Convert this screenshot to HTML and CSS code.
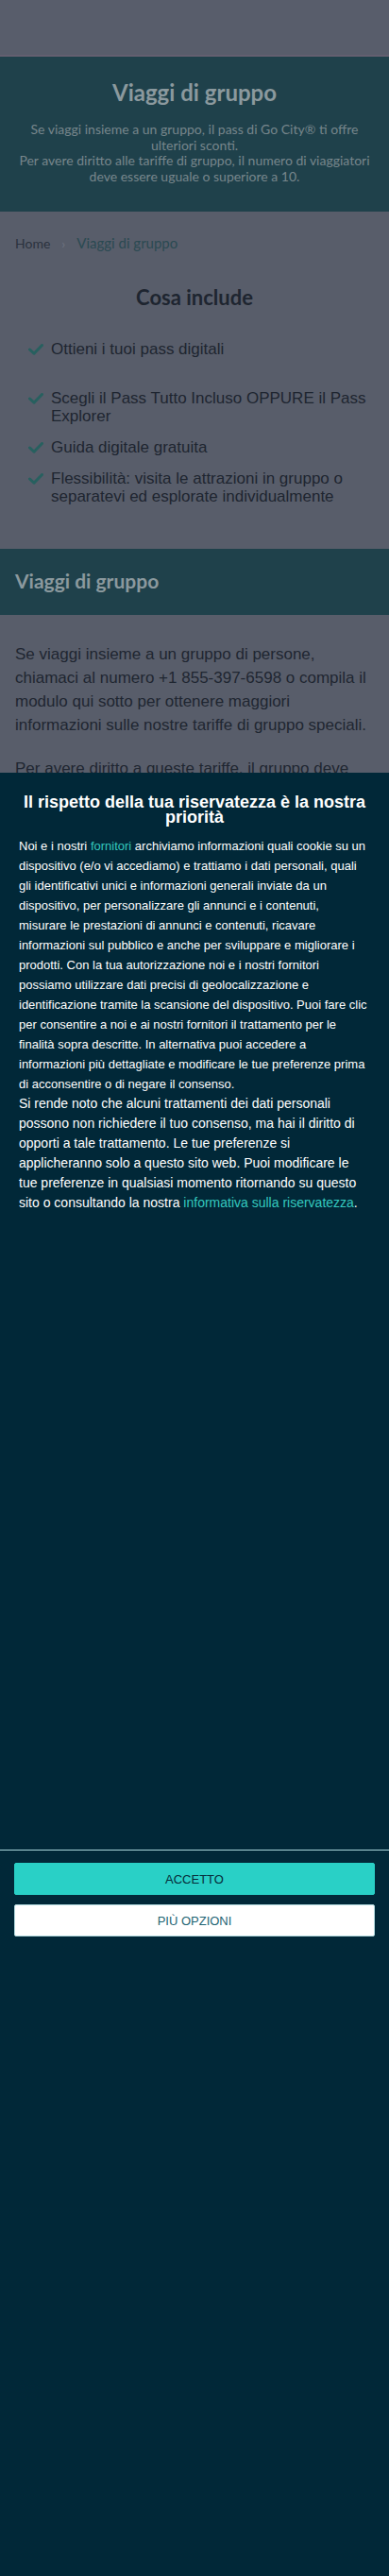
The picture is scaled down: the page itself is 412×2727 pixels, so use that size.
FILE: index.html
```html
<!DOCTYPE html>
<html lang="it">
<head>
<meta charset="utf-8">
<meta name="viewport" content="width=device-width, initial-scale=1">
<title>Viaggi di gruppo | Go City</title>
<link rel="stylesheet" href="styles.css">
</head>
<body>
<header class="site-header"></header>

<section class="hero">
  <h1 class="hero-title">Viaggi di gruppo</h1>
  <p class="hero-sub">Se viaggi insieme a un gruppo, il pass di Go City® ti offre<br>ulteriori sconti.<br>Per avere diritto alle tariffe di gruppo, il numero di viaggiatori<br>deve essere uguale o superiore a 10.</p>
</section>

<nav class="crumbs">
  <span class="crumb">Home</span>
  <span class="crumb-sep">›</span>
  <span class="crumb crumb-current">Viaggi di gruppo</span>
</nav>

<section class="includes">
  <h2 class="includes-title">Cosa include</h2>
  <ul class="checklist">
    <li class="check-item check-item-first"><svg class="check" viewBox="0 0 16 12"><polyline points="1.5,6 6,10.2 14.5,1.5"/></svg><span>Ottieni i tuoi pass digitali</span></li>
    <li class="check-item"><svg class="check" viewBox="0 0 16 12"><polyline points="1.5,6 6,10.2 14.5,1.5"/></svg><span>Scegli il Pass Tutto Incluso OPPURE il Pass Explorer</span></li>
    <li class="check-item"><svg class="check" viewBox="0 0 16 12"><polyline points="1.5,6 6,10.2 14.5,1.5"/></svg><span>Guida digitale gratuita</span></li>
    <li class="check-item"><svg class="check" viewBox="0 0 16 12"><polyline points="1.5,6 6,10.2 14.5,1.5"/></svg><span>Flessibilità: visita le attrazioni in gruppo o separatevi ed esplorate individualmente</span></li>
  </ul>
</section>

<section class="band">
  <h2 class="band-title">Viaggi di gruppo</h2>
</section>

<section class="content">
  <p class="content-text">Se viaggi insieme a un gruppo di persone, chiamaci al numero +1 855-397-6598 o compila il modulo qui sotto per ottenere maggiori informazioni sulle nostre tariffe di gruppo speciali.</p>
  <p class="content-text">Per avere diritto a queste tariffe, il gruppo deve essere composto da almeno 10 persone.</p>
</section>

<div class="cmp-panel" role="dialog" aria-label="Il rispetto della tua riservatezza è la nostra priorità">
  <div class="cmp-body">
    <h2 class="cmp-title">Il rispetto della tua riservatezza è la nostra priorità</h2>
    <div class="cmp-text">Noi e i nostri <a class="cmp-link" href="#">fornitori</a> archiviamo informazioni quali cookie su un<br>dispositivo (e/o vi accediamo) e trattiamo i dati personali, quali<br>gli identificativi unici e informazioni generali inviate da un<br>dispositivo, per personalizzare gli annunci e i contenuti,<br>misurare le prestazioni di annunci e contenuti, ricavare<br>informazioni sul pubblico e anche per sviluppare e migliorare i<br>prodotti. Con la tua autorizzazione noi e i nostri fornitori<br>possiamo utilizzare dati precisi di geolocalizzazione e<br>identificazione tramite la scansione del dispositivo. Puoi fare clic<br>per consentire a noi e ai nostri fornitori il trattamento per le<br>finalità sopra descritte. In alternativa puoi accedere a<br>informazioni più dettagliate e modificare le tue preferenze prima<br>di acconsentire o di negare il consenso.</div>
    <div class="cmp-text cmp-text-large">Si rende noto che alcuni trattamenti dei dati personali<br>possono non richiedere il tuo consenso, ma hai il diritto di<br>opporti a tale trattamento. Le tue preferenze si<br>applicheranno solo a questo sito web. Puoi modificare le<br>tue preferenze in qualsiasi momento ritornando su questo<br>sito o consultando la nostra <a class="cmp-link" href="#">informativa sulla riservatezza</a>.</div>
  </div>
  <div class="cmp-footer">
    <button class="cmp-btn cmp-btn-accept" type="button">ACCETTO</button>
    <button class="cmp-btn cmp-btn-more" type="button">PIÙ OPZIONI</button>
  </div>
</div>
</body>
</html>
```

FILE: styles.css
```css
html, body {
  margin: 0;
  padding: 0;
}

body {
  background: #585d6a;
  font-family: "Liberation Sans", Arial, sans-serif;
  color: #1f2631;
}

.site-header {
  height: 58px;
  background: #585d6b;
  border-bottom: 2px solid #645f70;
}

.hero {
  background: #1f414b;
  height: 164px;
  box-sizing: border-box;
  padding: 22px 8px 0;
  text-align: center;
  font-family: Lato, "Open Sans", sans-serif;
}

.hero-title {
  margin: 0;
  font-size: 24px;
  line-height: 32px;
  font-weight: 700;
  color: #8b999e;
}

.hero-sub {
  margin: 15px 0 0;
  font-size: 14px;
  line-height: 16.5px;
  color: #77868c;
}

.crumbs {
  font-family: Lato, "Open Sans", sans-serif;
  font-size: 14px;
  line-height: 20px;
  padding: 23px 16px 0;
  display: flex;
  gap: 12px;
  align-items: baseline;
}

.crumb {
  color: #2b323e;
}

.crumb-sep {
  color: #6d7380;
}

.crumb-current {
  color: #2b4a52;
  font-size: 15px;
}

.includes {
  padding: 33px 16px 0;
}

.includes-title {
  margin: 0;
  text-align: center;
  font-family: Lato, "Open Sans", sans-serif;
  font-size: 22px;
  line-height: 28px;
  font-weight: 700;
  color: #1e2530;
}

.checklist {
  list-style: none;
  margin: 31px 0 0;
  padding: 0 0 0 14px;
}

.check-item {
  display: flex;
  align-items: flex-start;
  gap: 8px;
  font-size: 17px;
  line-height: 19px;
  margin-bottom: 14px;
  color: #1e2530;
}

.check-item-first {
  margin-bottom: 33px;
}

.check {
  flex: 0 0 16px;
  width: 16px;
  height: 12px;
  margin-top: 4px;
  fill: none;
  stroke: #27605f;
  stroke-width: 3;
  stroke-linecap: round;
  stroke-linejoin: round;
}

.band {
  margin-top: 46px;
  background: #1f414b;
  height: 70px;
  box-sizing: border-box;
  padding: 20px 16px 0;
}

.band-title {
  margin: 0;
  font-family: Lato, "Open Sans", sans-serif;
  font-size: 21px;
  line-height: 28px;
  font-weight: 700;
  color: #8b999e;
}

.content {
  padding: 29px 16px 0;
}

.content-text {
  margin: 0 0 21px;
  font-size: 17px;
  line-height: 25px;
  color: #1f2631;
}

.cmp-panel {
  position: fixed;
  left: 0;
  right: 0;
  bottom: 0;
  height: 70vh;
  background: #012838;
  color: #ffffff;
  font-family: "Liberation Sans", Arial, sans-serif;
  display: flex;
  flex-direction: column;
}

.cmp-body {
  height: 1140px;
  box-sizing: border-box;
  padding: 23px 20px 0;
}

.cmp-title {
  margin: 0 0 12px;
  text-align: center;
  font-size: 18px;
  line-height: 16px;
  font-weight: 700;
}

.cmp-text {
  font-size: 13px;
  line-height: 21px;
}

.cmp-text-large {
  font-size: 14px;
}

.cmp-link {
  color: #34c8bf;
  text-decoration: none;
}

.cmp-footer {
  border-top: 1px solid #a9d6dc;
  padding: 13px 15px;
  display: flex;
  flex-direction: column;
  gap: 10px;
}

.cmp-btn {
  height: 34px;
  border-radius: 2px;
  font-family: "Liberation Sans", Arial, sans-serif;
  font-size: 13px;
  cursor: pointer;
}

.cmp-btn-accept {
  background: #29d0c6;
  color: #062b39;
  border: 1px solid #29d0c6;
}

.cmp-btn-more {
  background: #ffffff;
  color: #1e6473;
  border: 1px solid #b3dadf;
}
```
